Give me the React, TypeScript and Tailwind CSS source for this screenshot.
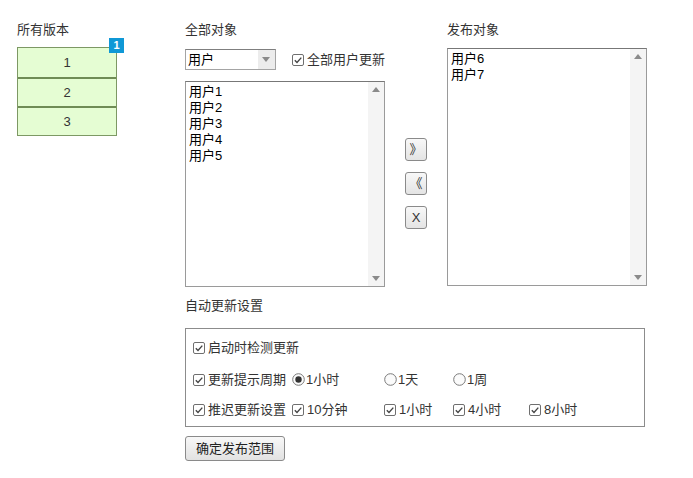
import React from "react";

const font = "font-['Liberation_Sans','Noto_Sans_CJK_SC',sans-serif]";

const CheckIcon = () => (
  <svg width="12" height="12" viewBox="0 0 12 12" className="shrink-0">
    <rect x="0.5" y="0.5" width="11" height="11" rx="1.5" fill="#fff" stroke="#6f6f6f" />
    <path d="M2.8 6.2 L5 8.4 L9.3 3.6" fill="none" stroke="#444" strokeWidth="1.4" />
  </svg>
);

const RadioIcon = ({ on }: { on?: boolean }) => (
  <svg width="13" height="13" viewBox="0 0 13 13" className="shrink-0">
    <circle cx="6.5" cy="6.5" r="5.8" fill="#fbfbfb" stroke="#7a7a7a" />
    {on && <circle cx="6.5" cy="6.5" r="3.2" fill="#333" />}
  </svg>
);

const Check = ({ label }: { label: string }) => (
  <div className="flex items-center gap-[3px] whitespace-nowrap">
    <CheckIcon />
    <span>{label}</span>
  </div>
);

const Radio = ({ label, on }: { label: string; on?: boolean }) => (
  <div className="flex items-center gap-[1px] whitespace-nowrap">
    <RadioIcon on={on} />
    <span>{label}</span>
  </div>
);

const Tri = ({ up }: { up?: boolean }) => (
  <svg width="8" height="5" viewBox="0 0 8 5">
    <path d={up ? "M0 5 L4 0 L8 5 Z" : "M0 0 L4 5 L8 0 Z"} fill="#8a8a8a" />
  </svg>
);

const ListBox = ({ items, h }: { items: string[]; h: string }) => (
  <div className={`flex w-[200px] ${h} border border-[#9a9a9a] border-t-[#777] bg-white`}>
    <div className="flex-1 px-[3px] pt-[2px] text-[13px] leading-[16px] text-black">
      {items.map((it) => (
        <div key={it}>{it}</div>
      ))}
    </div>
    <div className="flex w-[16px] flex-col items-center justify-between bg-[#f4f4f4] py-[5px]">
      <Tri up />
      <Tri />
    </div>
  </div>
);

const SmallBtn = ({ children }: { children: React.ReactNode }) => (
  <button className="flex h-[23px] w-[22px] items-center justify-center rounded-[3px] border border-[#8a8a8a] bg-gradient-to-b from-[#f8f8f8] to-[#e4e4e4] text-[13px] text-[#333]">
    {children}
  </button>
);

export default function App() {
  return (
    <div className={`${font} flex min-h-[478px] bg-white pl-[17px] pt-[22px] text-[13px] text-[#333]`}>
      <div className="w-[100px]">
        <div className="leading-[16px]">所有版本</div>
        <div className="relative mt-[9px] border border-[#7d9864]">
          {["1", "2", "3"].map((v, i) => (
            <div
              key={v}
              className={`flex h-[29px] items-center justify-center bg-[#e5fdd3] ${i > 0 ? "border-t-2 border-[#6f8c55]" : ""}`}
            >
              {v}
            </div>
          ))}
          <div className="absolute -right-[8px] -top-[10px] flex h-[15px] w-[15px] items-center justify-center bg-[#0f98d6] text-[11px] font-bold text-white">
            1
          </div>
        </div>
      </div>

      <div className="ml-[68px]">
        <div className="flex">
          <div className="w-[200px]">
            <div className="leading-[16px]">全部对象</div>
            <div className="mt-[11px] flex items-center">
              <div className="flex h-[21px] w-[91px] border border-[#a4a4a4] border-t-[#7f7f7f] bg-white">
                <div className="flex-1 pl-[2px] leading-[19px] text-black">用户</div>
                <div className="flex w-[17px] items-center justify-center bg-[#ececec]">
                  <Tri />
                </div>
              </div>
              <div className="ml-[16px]">
                <Check label="全部用户更新" />
              </div>
            </div>
            <div className="mt-[11px]">
              <ListBox items={["用户1", "用户2", "用户3", "用户4", "用户5"]} h="h-[206px]" />
            </div>
          </div>

          <div className="ml-[20px] flex flex-col gap-[11px] pt-[116px]">
            <SmallBtn>》</SmallBtn>
            <SmallBtn>《</SmallBtn>
            <SmallBtn>X</SmallBtn>
          </div>

          <div className="ml-[20px] w-[200px]">
            <div className="leading-[16px]">发布对象</div>
            <div className="mt-[10px]">
              <ListBox items={["用户6", "用户7"]} h="h-[238px]" />
            </div>
          </div>
        </div>

        <div className="mt-[11px] leading-[16px]">自动更新设置</div>

        <div className="mt-[14px] w-[460px] border border-[#8c8c8c] px-[7px] pt-[11px] pb-[10px]">
          <div className="flex h-[16px] items-center">
            <Check label="启动时检测更新" />
          </div>
          <div className="mt-[14px] grid h-[16px] grid-cols-[99px_92px_69px_76px_1fr] items-center">
            <Check label="更新提示周期" />
            <Radio label="1小时" on />
            <Radio label="1天" />
            <Radio label="1周" />
            <div />
          </div>
          <div className="mt-[14px] grid h-[16px] grid-cols-[99px_92px_69px_76px_1fr] items-center">
            <Check label="推迟更新设置" />
            <Check label="10分钟" />
            <Check label="1小时" />
            <Check label="4小时" />
            <Check label="8小时" />
          </div>
        </div>

        <button className="mt-[9px] h-[25px] w-[100px] rounded-[3px] border border-[#8a8a8a] bg-gradient-to-b from-[#f8f8f8] to-[#e2e2e2] text-[13px] text-[#222]">
          确定发布范围
        </button>
      </div>
    </div>
  );
}
